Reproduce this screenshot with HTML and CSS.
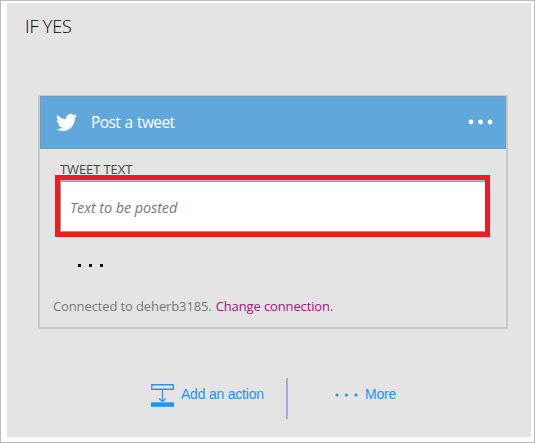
FILE: index.html
```html
<!DOCTYPE html>
<html lang="en">
<head>
<meta charset="utf-8">
<title>If yes</title>
<link rel="stylesheet" href="styles.css">
</head>
<body>
<main class="panel">
  <h1 class="title"><span>IF YES</span></h1>
  <section class="card">
    <header class="card-header">
      <svg class="bird" viewBox="0 0 24 24"><path d="M23.95 4.57a10 10 0 0 1-2.82.77 4.96 4.96 0 0 0 2.16-2.72c-.95.55-2 .95-3.13 1.18a4.92 4.92 0 0 0-8.38 4.48C7.69 8.1 4.07 6.13 1.64 3.16a4.82 4.82 0 0 0-.67 2.48c0 1.71.87 3.21 2.19 4.1a4.9 4.9 0 0 1-2.23-.62v.06a4.92 4.92 0 0 0 3.95 4.83 5 5 0 0 1-2.21.08 4.94 4.94 0 0 0 4.6 3.42A9.87 9.87 0 0 1 0 19.54a14 14 0 0 0 7.55 2.21c9.05 0 14-7.5 14-13.98 0-.21 0-.42-.02-.63a9.94 9.94 0 0 0 2.42-2.57z"/></svg>
      <h2 class="card-title">Post a tweet</h2>
      <svg class="menu" viewBox="0 0 26 6"><circle cx="3" cy="3" r="2.4"/><circle cx="12.5" cy="3" r="2.4"/><circle cx="22" cy="3" r="2.4"/></svg>
    </header>
    <div class="card-body">
      <label class="label"><span>TWEET TEXT</span></label>
      <div class="highlight"><div class="field"><span>Text to be posted</span></div></div>
      <svg class="more-fields" viewBox="0 0 26 3"><path d="M0 0h3v3H0zM11 0h3v3h-3zM22 0h3v3h-3z"/></svg>
      <p class="connection"><span class="account">Connected to deherb3185.</span><a class="change">Change connection.</a></p>
    </div>
  </section>
  <footer class="actions">
    <a class="add">
      <svg class="add-icon" viewBox="0 0 23 23"><path class="line" d="M.75.75h21.500v4.500H.75zM11.500 5.500v12M8 14.500l3.500 3 3.500-3"/><path class="bar" d="M0 18.300h23v4.500H0z"/></svg>
      <span>Add an action</span>
    </a>
    <i class="divider"></i>
    <a class="more">
      <svg class="more-icon" viewBox="0 0 24 4"><circle cx="2" cy="2" r="1.600"/><circle cx="11.500" cy="2" r="1.600"/><circle cx="21" cy="2" r="1.600"/></svg>
      <span>More</span>
    </a>
  </footer>
</main>
</body>
</html>
```
FILE: styles.css
```css
* { box-sizing: border-box; }
body {
  margin: 0;
  width: 535px;
  height: 443px;
  padding: 2px 3px 5px 6px;
  border: 1px solid #bababa;
  background: #fff;
  font-family: "Open Sans", "Noto Sans", sans-serif;
}
svg { display: block; flex: none; }
span, a, h2 { white-space: nowrap; }
.panel { height: 434px; background: #e4e4e4; padding: 10px 23px 0 31px; }
.title {
  margin: 0 0 0 -13px;
  height: 82px;
  font-size: 18px;
  line-height: 26px;
  font-weight: 300;
  letter-spacing: -.15px;
  color: #000;
}
.card { width: 470px; height: 234px; border: 2px solid #c8c8c8; border-top-width: 1px; }
.card-header {
  display: flex;
  align-items: center;
  height: 53px;
  padding: 0 11px 1px 15px;
  border: 1px solid #6f9bbb;
  background: #60a8dc;
}
.bird { width: 21px; height: 21px; fill: #fff; }
.card-title {
  flex: 1;
  margin: 0 0 0 14px;
  font-size: 15.500px;
  line-height: 22px;
  font-weight: 400;
  letter-spacing: -.6px;
  word-spacing: 1px;
  color: #fff;
}
.menu { width: 26px; height: 6px; fill: #fff; }
.card-body { padding: 12px 15px 0; }
.label {
  display: block;
  height: 14px;
  padding-left: 5px;
  font-size: 13px;
  line-height: 16px;
  letter-spacing: -.1px;
  color: #444;
}
.highlight { width: 435px; height: 62px; border: 5px solid #ed1c24; padding-top: 1px; background: #bbb; }
.field {
  height: 51px;
  padding-left: 9px;
  border: 1px solid #999;
  border-right: 0;
  background: #fff;
  font-size: 14.500px;
  font-style: italic;
  line-height: 52px;
  letter-spacing: -.12px;
  color: #777;
}
.more-fields { width: 26px; height: 3px; margin: 27px 0 0 23px; }
.connection {
  display: flex;
  gap: 4px;
  margin: 29px 0 0 -2px;
  font-size: 13px;
  line-height: 20px;
  letter-spacing: -.12px;
  color: #777;
}
.change { color: #a3157b; }
.actions {
  display: flex;
  height: 41px;
  margin: 49px 0 0 113px;
  font: 14px/32px "Liberation Sans", sans-serif;
  letter-spacing: -.22px;
  color: #1e90ff;
}
.add { display: flex; width: 135px; gap: 7px; }
.add-icon { width: 23px; height: 23px; margin-top: 6px; }
.line { fill: none; stroke: #2594fa; stroke-width: 1.3; }
.bar { fill: #1e94fc; }
.divider { width: 2px; background: #9aafe8; }
.more { display: flex; gap: 6px; margin-left: 47px; }
.more-icon { width: 24px; height: 4px; margin-top: 15px; fill: #1e94fc; }
```
